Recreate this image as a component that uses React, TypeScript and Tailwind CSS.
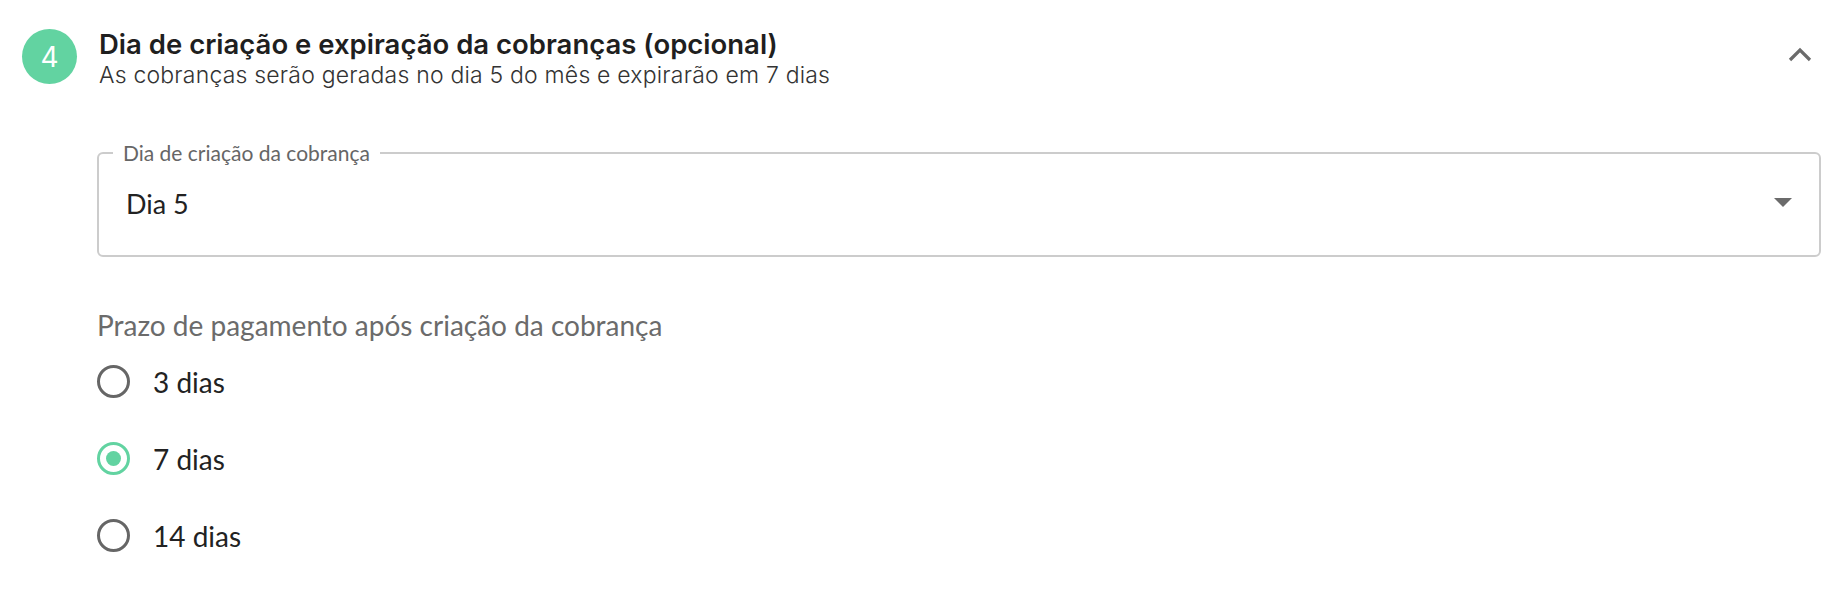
const options = [
  { id: 3, label: '3 dias' },
  { id: 7, label: '7 dias' },
  { id: 14, label: '14 dias' },
]

export default function App() {
  const selected = 7

  return (
    <div className="w-full h-[598px] bg-white font-['Lato',sans-serif]">
      {/* Header */}
      <div className="flex items-start justify-between pl-[22px] pr-[32px] pt-[29px]">
        <div className="flex items-start gap-[22px]">
          <div className="w-[55px] h-[55px] rounded-full bg-[#62d3a1] text-white flex items-center justify-center text-[28px] font-['Inter',sans-serif]">
            4
          </div>
          <div className="font-['Inter',sans-serif] -mt-[2px]">
            <h2 className="text-[27.5px] leading-[34px] font-semibold text-[#1f1f1f]">
              Dia de criação e expiração da cobranças (opcional)
            </h2>
            <p className="text-[23px] leading-[28px] tracking-[0.2px] font-light text-[#333333]">
              As cobranças serão geradas no dia 5 do mês e expirarão em 7 dias
            </p>
          </div>
        </div>
        <svg width="24" height="16" viewBox="0 0 24 16" className="mt-[18px]">
          <polyline points="2,13 12,3 22,13" fill="none" stroke="#6b6b6b" strokeWidth="3.2" />
        </svg>
      </div>

      {/* Body */}
      <div className="pl-[97px] pr-[23px] mt-[51px]">
        {/* Select */}
        <fieldset className="border-2 border-[#cccccc] rounded-[6px] p-0 m-0 min-w-0">
          <legend className="ml-[14px] px-[10px] text-[21px] leading-[26px] text-[#666666]">
            Dia de criação da cobrança
          </legend>
          <div className="h-[89px] pb-[12px] flex items-center justify-between pl-[27px] pr-[27px]">
            <span className="text-[27px] text-[#222222]">Dia 5</span>
            <svg width="18" height="10" viewBox="0 0 18 10" className="mb-[4px]">
              <path d="M0 0 L18 0 L9 9 Z" fill="#6b6b6b" />
            </svg>
          </div>
        </fieldset>

        {/* Prazo */}
        <p className="mt-[51px] text-[28px] leading-[34px] text-[#6b6b6b]">
          Prazo de pagamento após criação da cobrança
        </p>
        <div className="mt-[23px] flex flex-col gap-[44px]">
          {options.map((opt) => {
            const active = opt.id === selected
            return (
              <label key={opt.id} className="flex items-center gap-[23px] h-[33px]">
                <span
                  className={`w-[33px] h-[33px] rounded-full border-[3px] flex items-center justify-center ${
                    active ? 'border-[#62d3a1]' : 'border-[#666666]'
                  }`}
                >
                  {active && <span className="w-[15px] h-[15px] rounded-full bg-[#62d3a1]" />}
                </span>
                <span className="text-[28px] text-[#222222]">{opt.label}</span>
              </label>
            )
          })}
        </div>
      </div>
    </div>
  )
}
